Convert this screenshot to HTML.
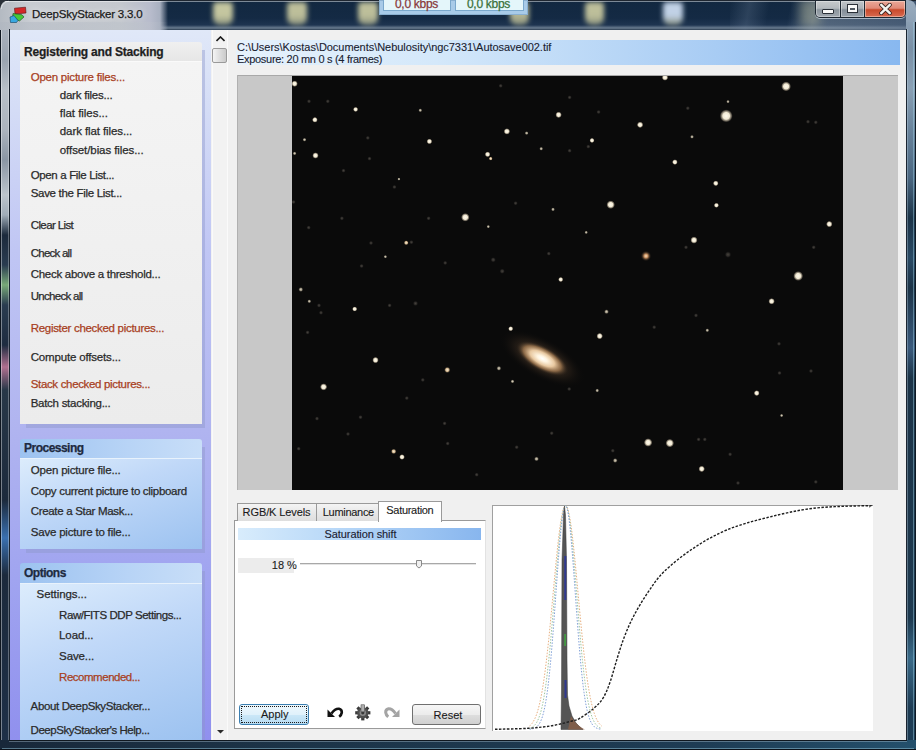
<!DOCTYPE html>
<html><head><meta charset="utf-8"><style>
html,body{margin:0;padding:0;}
body{width:916px;height:750px;overflow:hidden;position:relative;background:#1a2a40;font-family:"Liberation Sans", sans-serif;}
.t{-webkit-text-stroke:0.25px currentColor;}
.t2{-webkit-text-stroke:0.1px currentColor;}
</style></head><body>
<div style="position:absolute;left:0px;top:0px;width:916px;height:30px;background:linear-gradient(to bottom,#122840 0px,#142a44 18px,#1e3450 25px,#6a7c90 28px,#2a3c50 30px);"></div><div style="position:absolute;left:0px;top:0px;width:168px;height:30px;background:linear-gradient(to right,#b4bac2 0px,#c8ccd2 30px,#c4c8ce 120px,#b8bccc 150px,#a8b0c0 160px,rgba(120,135,160,0.0) 168px);"></div><div style="position:absolute;left:0px;top:22px;width:168px;height:8px;background:linear-gradient(to right,rgba(175,182,192,0.5),rgba(190,196,204,0.45) 140px,rgba(60,80,100,0) 168px);"></div><div style="position:absolute;left:213.0px;top:2px;width:20px;height:23px;background:linear-gradient(to bottom,#d4d4a8,#d4d4a8 60%,rgba(190,190,150,0.7));filter:blur(2.5px);border-radius:4px 4px 7px 7px;opacity:0.92;"></div><div style="position:absolute;left:287.0px;top:2px;width:20px;height:23px;background:linear-gradient(to bottom,#ccccA2,#ccccA2 60%,rgba(190,190,150,0.7));filter:blur(2.5px);border-radius:4px 4px 7px 7px;opacity:0.92;"></div><div style="position:absolute;left:358.0px;top:2px;width:20px;height:23px;background:linear-gradient(to bottom,#ccccA2,#ccccA2 60%,rgba(190,190,150,0.7));filter:blur(2.5px);border-radius:4px 4px 7px 7px;opacity:0.92;"></div><div style="position:absolute;left:509.5px;top:2px;width:19px;height:23px;background:linear-gradient(to bottom,#c4c49c,#c4c49c 60%,rgba(190,190,150,0.7));filter:blur(2.5px);border-radius:4px 4px 7px 7px;opacity:0.92;"></div><div style="position:absolute;left:584.5px;top:2px;width:19px;height:23px;background:linear-gradient(to bottom,#ccccA2,#ccccA2 60%,rgba(190,190,150,0.7));filter:blur(2.5px);border-radius:4px 4px 7px 7px;opacity:0.92;"></div><div style="position:absolute;left:663.0px;top:2px;width:20px;height:23px;background:linear-gradient(to bottom,#d0e0f4,#d0e0f4 60%,rgba(190,190,150,0.7));filter:blur(2.5px);border-radius:4px 4px 7px 7px;opacity:0.92;"></div><div style="position:absolute;left:730px;top:0px;width:186px;height:30px;background:linear-gradient(100deg,rgba(140,160,180,0) 0px,rgba(120,140,165,0.25) 20px,rgba(140,160,182,0) 40px,rgba(140,160,182,0) 60px,rgba(150,165,180,0.45) 85px,rgba(110,130,155,0.5) 186px);"></div><div style="position:absolute;left:800px;top:0px;width:20px;height:26px;background:rgba(200,200,160,0.35);filter:blur(4px);"></div><div style="position:absolute;left:0px;top:0px;width:916px;height:1px;background:#1e2630;"></div><div style="position:absolute;left:2px;top:1px;width:904px;height:1px;background:rgba(255,255,255,0.45);"></div><svg style="position:absolute;left:0;top:0" width="10" height="10" viewBox="0 0 10 10"><path d="M0 0 H9 Q1 1 0 9 Z" fill="#2a3038"/><path d="M9 1.2 Q2 2 1.2 9" stroke="rgba(255,255,255,0.5)" stroke-width="1" fill="none"/></svg><div style="position:absolute;left:0px;top:30px;width:10px;height:720px;background:linear-gradient(to bottom,#a8b0bc 0px,#9aa4b0 30px,#b8c0c8 60px,#acb4be 100px,#8a96a4 130px,#bcc4cc 165px,#a0acb8 185px,#1c2a3c 205px,#2a3c50 235px,#78a878 255px,#2a3c50 275px,#1e2c40 315px,#b07090 337px,#283848 360px,#1c2a3c 470px,#3a70b0 508px,#1c2a3c 545px,#1e3048 720px);"></div><div style="position:absolute;left:0px;top:30px;width:1px;height:720px;background:#0e1620;"></div><div style="position:absolute;left:1px;top:30px;width:1px;height:715px;background:rgba(255,255,255,0.4);"></div><div style="position:absolute;left:8px;top:30px;width:1px;height:711px;background:rgba(255,255,255,0.3);"></div><div style="position:absolute;left:9px;top:29px;width:1px;height:712px;background:#1a2430;"></div><div style="position:absolute;left:906px;top:18px;width:10px;height:732px;background:linear-gradient(to bottom,#8ea2b6 0px,#7a90a6 30px,#8aa0b4 70px,#6a849c 110px,#4a6680 160px,#1c3448 200px,#2a4a64 240px,#1c3448 270px,#3a5a7c 330px,#1c3448 360px,#1e3a50 600px,#3a6a88 640px,#1e3c54 690px);"></div><div style="position:absolute;left:915px;top:20px;width:1px;height:730px;background:#0e1a24;"></div><div style="position:absolute;left:913px;top:20px;width:1px;height:725px;background:rgba(160,210,230,0.45);"></div><div style="position:absolute;left:906px;top:29px;width:1px;height:712px;background:#1a2430;"></div><div style="position:absolute;left:907px;top:29px;width:1px;height:712px;background:rgba(200,220,235,0.35);"></div><div style="position:absolute;left:0px;top:740px;width:916px;height:10px;background:linear-gradient(to right,#18283a,#1c3448 300px,#1e3c54 700px,#24506c);"></div><div style="position:absolute;left:9px;top:740px;width:898px;height:1px;background:#101820;"></div><div style="position:absolute;left:9px;top:741px;width:898px;height:1px;background:rgba(200,220,235,0.35);"></div><div style="position:absolute;left:2px;top:748px;width:912px;height:1px;background:rgba(150,200,220,0.5);"></div><div style="position:absolute;left:0px;top:749px;width:916px;height:1px;background:#0a1018;"></div><div style="position:absolute;left:906px;top:0px;width:10px;height:22px;background:linear-gradient(to bottom,#9aacbe,#8ea2b6);border-top-right-radius:8px;"></div><svg style="position:absolute;left:0px;top:0px" width="30" height="26" viewBox="0 0 30 26">
<polygon points="14.5,8.2 25.5,7.2 26,13 15,14" fill="#d42828" stroke="#5a1010" stroke-width="0.6"/>
<polygon points="13,13.5 22,14.8 24,17 19.5,21 12.5,18" fill="#48c838" stroke="#1a4a18" stroke-width="0.6"/>
<polygon points="10,17 14,15.5 18,20.5 16.5,22.5 10.5,22.5" fill="#38a8e0" stroke="#124060" stroke-width="0.6"/>
</svg><div class="t" style="position:absolute;left:32px;top:8.75px;font-size:11.5px;line-height:11.5px;color:#1a1a1a;font-weight:normal;white-space:nowrap;letter-spacing:-0.2px;text-shadow:0 0 6px rgba(255,255,255,0.9);">DeepSkyStacker 3.3.0</div><div style="position:absolute;left:815px;top:0px;width:91px;height:18px;background:#1e2832;border-radius:0 0 5px 5px;box-shadow:0 1px 0 rgba(230,240,250,0.6);"></div><div style="position:absolute;left:816px;top:1px;width:24px;height:16px;background:linear-gradient(to bottom,#c6cacc 0%,#b4babe 45%,#8c969e 55%,#a0a8b0 100%);border-radius:0 0 0 4px;box-shadow:inset 0 0 0 1px rgba(255,255,255,0.35);"></div><div style="position:absolute;left:841px;top:1px;width:23px;height:16px;background:linear-gradient(to bottom,#c0c4c8 0%,#acb2b8 45%,#848e98 55%,#98a2ac 100%);box-shadow:inset 0 0 0 1px rgba(255,255,255,0.35);"></div><div style="position:absolute;left:865px;top:1px;width:40px;height:16px;background:linear-gradient(to bottom,#eaa898 0%,#e08a78 45%,#c84a2c 55%,#d86a50 100%);border-radius:0 0 4px 0;box-shadow:inset 0 0 0 1px rgba(255,235,225,0.45);"></div><div style="position:absolute;left:822px;top:9px;width:12px;height:5px;background:#f8f8f8;border:1px solid #2a3038;border-radius:1px;box-sizing:border-box;"></div><div style="position:absolute;left:847px;top:4px;width:11px;height:9px;background:#2e3640;border:1px solid #2a3038;box-sizing:border-box;box-shadow:inset 0 0 0 2px #f8f8f8, inset 0 2px 0 2px #f8f8f8;"></div><div style="position:absolute;left:850px;top:8px;width:5px;height:2px;background:#505860;"></div><svg style="position:absolute;left:878px;top:3px" width="15" height="12" viewBox="0 0 15 12"><path d="M3.2 1.8 L11.8 10.2 M11.8 1.8 L3.2 10.2" stroke="#3a2420" stroke-width="4" stroke-linecap="round"/><path d="M3.2 1.8 L11.8 10.2 M11.8 1.8 L3.2 10.2" stroke="#f4f4f0" stroke-width="2.4" stroke-linecap="round"/></svg><div style="position:absolute;left:379px;top:0px;width:149px;height:15px;background:#a8cbe8;border:1px solid #8ab0d0;box-sizing:border-box;"></div><div style="position:absolute;left:383px;top:0px;width:68px;height:11px;background:#e4f6fa;border:1px solid #7aa8cc;border-top:none;box-sizing:border-box;"></div><div style="position:absolute;left:455px;top:0px;width:69px;height:11px;background:#e4f6fa;border:1px solid #7aa8cc;border-top:none;box-sizing:border-box;"></div><div class="t" style="position:absolute;left:395px;top:-1.97px;font-size:12px;line-height:12px;color:#883838;font-weight:normal;white-space:nowrap;letter-spacing:-0.3px;">0,0 kbps</div><div class="t" style="position:absolute;left:467px;top:-1.97px;font-size:12px;line-height:12px;color:#387038;font-weight:normal;white-space:nowrap;letter-spacing:-0.3px;">0,0 kbps</div><div style="position:absolute;left:10px;top:30px;width:896px;height:710px;background:#f0f0f0;"></div><div style="position:absolute;left:10px;top:30px;width:201px;height:710px;background:linear-gradient(to bottom,#e0e8f8 0px,#d4dcf6 80px,#c0c6f4 220px,#b0b4f0 400px,#a0a4f0 550px,#9090ee 710px);"></div><div style="position:absolute;left:211px;top:30px;width:17px;height:710px;background:#f2f2f2;"></div><div style="position:absolute;left:212px;top:30px;width:1px;height:710px;background:#fafafa;"></div><div style="position:absolute;left:227px;top:30px;width:1px;height:710px;background:#fafafa;"></div><svg style="position:absolute;left:216px;top:36px" width="9" height="6" viewBox="0 0 9 6"><path d="M0.5 5 L4.5 1 L8.5 5" stroke="#1a1a1a" stroke-width="1.6" fill="none"/></svg><div style="position:absolute;left:212px;top:48px;width:15px;height:15px;background:linear-gradient(to right,#f4f4f4,#dadada 60%,#cacaca);border:1px solid #9a9a9a;border-radius:2px;box-sizing:border-box;"></div><svg style="position:absolute;left:216px;top:729px" width="9" height="5" viewBox="0 0 9 5"><path d="M1 1 L8 1 L4.5 4.5 Z" fill="#2a2a2a"/></svg><div style="position:absolute;left:202px;top:50px;width:3px;height:378px;background:rgba(140,150,200,0.42);"></div><div style="position:absolute;left:26px;top:424px;width:176px;height:4px;background:rgba(140,150,200,0.42);"></div><div style="position:absolute;left:20px;top:42px;width:182px;height:19px;background:linear-gradient(to bottom,#f0f0f0,#e6e6e6);border-radius:3px 3px 0 0;"></div><div style="position:absolute;left:20px;top:61px;width:182px;height:363px;background:linear-gradient(to bottom,#f4f4f4,#ececec);border-top:1px solid #fafafa;box-sizing:border-box;"></div><div style="position:absolute;left:202px;top:447px;width:3px;height:106px;background:rgba(140,150,200,0.42);"></div><div style="position:absolute;left:26px;top:549px;width:176px;height:4px;background:rgba(140,150,200,0.42);"></div><div style="position:absolute;left:20px;top:439px;width:182px;height:19px;background:linear-gradient(to right,#9cc2f0,#b8d4f6 60%,#c8def8);border-radius:3px 3px 0 0;"></div><div style="position:absolute;left:20px;top:458px;width:182px;height:91px;background:linear-gradient(160deg,#dcecfc 0%,#c0d8f8 40%,#9cc2f0 100%);border-top:1px solid #e8f2fc;box-sizing:border-box;"></div><div style="position:absolute;left:202px;top:571px;width:3px;height:169px;background:rgba(140,150,200,0.42);"></div><div style="position:absolute;left:20px;top:563px;width:182px;height:20px;background:linear-gradient(to right,#9cc2f0,#b8d4f6 60%,#c8def8);border-radius:3px 3px 0 0;"></div><div style="position:absolute;left:20px;top:583px;width:182px;height:157px;background:linear-gradient(160deg,#dcecfc 0%,#c0d8f8 40%,#9cc2f0 100%);border-top:1px solid #e8f2fc;box-sizing:border-box;"></div><div class="t" style="position:absolute;left:24px;top:45.73px;font-size:12px;line-height:12px;color:#1e1e1e;font-weight:bold;white-space:nowrap;letter-spacing:-0.191px;">Registering and Stacking</div><div class="t" style="position:absolute;left:30.7px;top:71.95px;font-size:11.5px;line-height:11.5px;color:#a8401e;font-weight:normal;white-space:nowrap;letter-spacing:-0.230px;">Open picture files...</div><div class="t" style="position:absolute;left:59.8px;top:90.45px;font-size:11.5px;line-height:11.5px;color:#2a2a2a;font-weight:normal;white-space:nowrap;letter-spacing:-0.233px;">dark files...</div><div class="t" style="position:absolute;left:59.8px;top:108.45px;font-size:11.5px;line-height:11.5px;color:#2a2a2a;font-weight:normal;white-space:nowrap;letter-spacing:-0.033px;">flat files...</div><div class="t" style="position:absolute;left:59.8px;top:125.95px;font-size:11.5px;line-height:11.5px;color:#2a2a2a;font-weight:normal;white-space:nowrap;letter-spacing:-0.097px;">dark flat files...</div><div class="t" style="position:absolute;left:59.8px;top:144.95px;font-size:11.5px;line-height:11.5px;color:#2a2a2a;font-weight:normal;white-space:nowrap;letter-spacing:-0.082px;">offset/bias files...</div><div class="t" style="position:absolute;left:30.7px;top:170.25px;font-size:11.5px;line-height:11.5px;color:#2a2a2a;font-weight:normal;white-space:nowrap;letter-spacing:-0.350px;">Open a File List...</div><div class="t" style="position:absolute;left:30.7px;top:188.15px;font-size:11.5px;line-height:11.5px;color:#2a2a2a;font-weight:normal;white-space:nowrap;letter-spacing:-0.310px;">Save the File List...</div><div class="t" style="position:absolute;left:30.7px;top:220.05px;font-size:11.5px;line-height:11.5px;color:#2a2a2a;font-weight:normal;white-space:nowrap;letter-spacing:-0.606px;">Clear List</div><div class="t" style="position:absolute;left:30.7px;top:248.45px;font-size:11.5px;line-height:11.5px;color:#2a2a2a;font-weight:normal;white-space:nowrap;letter-spacing:-0.750px;">Check all</div><div class="t" style="position:absolute;left:30.7px;top:268.55px;font-size:11.5px;line-height:11.5px;color:#2a2a2a;font-weight:normal;white-space:nowrap;letter-spacing:-0.274px;">Check above a threshold...</div><div class="t" style="position:absolute;left:30.7px;top:291.05px;font-size:11.5px;line-height:11.5px;color:#2a2a2a;font-weight:normal;white-space:nowrap;letter-spacing:-0.710px;">Uncheck all</div><div class="t" style="position:absolute;left:30.7px;top:322.95px;font-size:11.5px;line-height:11.5px;color:#a8401e;font-weight:normal;white-space:nowrap;letter-spacing:-0.302px;">Register checked pictures...</div><div class="t" style="position:absolute;left:30.7px;top:351.75px;font-size:11.5px;line-height:11.5px;color:#2a2a2a;font-weight:normal;white-space:nowrap;letter-spacing:-0.168px;">Compute offsets...</div><div class="t" style="position:absolute;left:30.7px;top:379.45px;font-size:11.5px;line-height:11.5px;color:#a8401e;font-weight:normal;white-space:nowrap;letter-spacing:-0.333px;">Stack checked pictures...</div><div class="t" style="position:absolute;left:30.7px;top:398.45px;font-size:11.5px;line-height:11.5px;color:#2a2a2a;font-weight:normal;white-space:nowrap;letter-spacing:-0.275px;">Batch stacking...</div><div class="t" style="position:absolute;left:24px;top:442.43px;font-size:12px;line-height:12px;color:#1e2a40;font-weight:bold;white-space:nowrap;letter-spacing:-0.511px;">Processing</div><div class="t" style="position:absolute;left:30.7px;top:465.15px;font-size:11.5px;line-height:11.5px;color:#2a2a2a;font-weight:normal;white-space:nowrap;letter-spacing:-0.176px;">Open picture file...</div><div class="t" style="position:absolute;left:30.7px;top:485.85px;font-size:11.5px;line-height:11.5px;color:#2a2a2a;font-weight:normal;white-space:nowrap;letter-spacing:-0.306px;">Copy current picture to clipboard</div><div class="t" style="position:absolute;left:30.7px;top:506.25px;font-size:11.5px;line-height:11.5px;color:#2a2a2a;font-weight:normal;white-space:nowrap;letter-spacing:-0.310px;">Create a Star Mask...</div><div class="t" style="position:absolute;left:30.7px;top:526.75px;font-size:11.5px;line-height:11.5px;color:#2a2a2a;font-weight:normal;white-space:nowrap;letter-spacing:-0.186px;">Save picture to file...</div><div class="t" style="position:absolute;left:24px;top:567.33px;font-size:12px;line-height:12px;color:#1e2a40;font-weight:bold;white-space:nowrap;letter-spacing:-0.500px;">Options</div><div class="t" style="position:absolute;left:36.6px;top:589.05px;font-size:11.5px;line-height:11.5px;color:#2a2a2a;font-weight:normal;white-space:nowrap;letter-spacing:-0.090px;">Settings...</div><div class="t" style="position:absolute;left:59.1px;top:609.75px;font-size:11.5px;line-height:11.5px;color:#2a2a2a;font-weight:normal;white-space:nowrap;letter-spacing:-0.441px;">Raw/FITS DDP Settings...</div><div class="t" style="position:absolute;left:59.1px;top:629.85px;font-size:11.5px;line-height:11.5px;color:#2a2a2a;font-weight:normal;white-space:nowrap;letter-spacing:-0.117px;">Load...</div><div class="t" style="position:absolute;left:59.1px;top:650.75px;font-size:11.5px;line-height:11.5px;color:#2a2a2a;font-weight:normal;white-space:nowrap;letter-spacing:-0.117px;">Save...</div><div class="t" style="position:absolute;left:59.1px;top:671.85px;font-size:11.5px;line-height:11.5px;color:#a8401e;font-weight:normal;white-space:nowrap;letter-spacing:-0.481px;">Recommended...</div><div class="t" style="position:absolute;left:30.6px;top:700.75px;font-size:11.5px;line-height:11.5px;color:#2a2a2a;font-weight:normal;white-space:nowrap;letter-spacing:-0.368px;">About DeepSkyStacker...</div><div class="t" style="position:absolute;left:30.6px;top:725.45px;font-size:11.5px;line-height:11.5px;color:#2a2a2a;font-weight:normal;white-space:nowrap;letter-spacing:-0.467px;">DeepSkyStacker's Help...</div><div style="position:absolute;left:236px;top:40px;width:664px;height:25px;background:linear-gradient(to right,#e6f2fc 0px,#d4e8fa 200px,#a8ccf4 480px,#88b8f0 664px);"></div><div class="t2" style="position:absolute;left:237px;top:41.86px;font-size:11px;line-height:11px;color:#1a2230;font-weight:normal;white-space:nowrap;letter-spacing:-0.04px;">C:\Users\Kostas\Documents\Nebulosity\ngc7331\Autosave002.tif</div><div class="t2" style="position:absolute;left:237px;top:54.26px;font-size:11px;line-height:11px;color:#1a2230;font-weight:normal;white-space:nowrap;letter-spacing:-0.3px;">Exposure: 20 mn 0 s (4 frames)</div><div style="position:absolute;left:237px;top:75px;width:661px;height:415px;background:#c8c8c8;"></div><div style="position:absolute;left:237px;top:75px;width:661px;height:1px;background:#a8a8a8;"></div><div style="position:absolute;left:237px;top:75px;width:1px;height:415px;background:#b0b0b0;"></div><div style="position:absolute;left:292px;top:76px;width:551px;height:414px;background:#0a0a0a;overflow:hidden;"><svg width="551" height="414" style="position:absolute;left:0;top:0"><defs><radialGradient id="gb"><stop offset="0" stop-color="#fffbee"/><stop offset="0.5" stop-color="#f0e8d2"/><stop offset="0.78" stop-color="#8a8070" stop-opacity="0.7"/><stop offset="1" stop-color="#0a0a0a" stop-opacity="0"/></radialGradient><radialGradient id="gm"><stop offset="0" stop-color="#d8d0bc"/><stop offset="0.45" stop-color="#9a9280"/><stop offset="1" stop-color="#0a0a0a" stop-opacity="0"/></radialGradient><radialGradient id="gf"><stop offset="0" stop-color="#46423c"/><stop offset="0.5" stop-color="#2a2826"/><stop offset="1" stop-color="#0a0a0a" stop-opacity="0"/></radialGradient><radialGradient id="go"><stop offset="0" stop-color="#f8e0c0"/><stop offset="0.35" stop-color="#c89060"/><stop offset="1" stop-color="#0a0a0a" stop-opacity="0"/></radialGradient><radialGradient id="gom"><stop offset="0" stop-color="#faf0dc"/><stop offset="0.5" stop-color="#d0b48c"/><stop offset="1" stop-color="#0a0a0a" stop-opacity="0"/></radialGradient><radialGradient id="gal1"><stop offset="0" stop-color="#ffffff"/><stop offset="0.18" stop-color="#fff4e0"/><stop offset="0.45" stop-color="#e8c8a0"/><stop offset="0.7" stop-color="#a07850" stop-opacity="0.8"/><stop offset="1" stop-color="#0a0a0a" stop-opacity="0"/></radialGradient><radialGradient id="gal2"><stop offset="0" stop-color="#806048" stop-opacity="0.7"/><stop offset="0.6" stop-color="#3a2c20" stop-opacity="0.5"/><stop offset="1" stop-color="#0a0a0a" stop-opacity="0"/></radialGradient></defs><g transform="translate(250.29999999999995,282.5) rotate(29)"><ellipse rx="48" ry="20" fill="url(#gal2)"/><ellipse rx="30" ry="12.5" fill="url(#gal1)"/></g><circle cx="2.6" cy="7.7" r="3.4" fill="url(#gb)"/><circle cx="17.0" cy="25.3" r="2.4" fill="url(#gf)"/><circle cx="35.8" cy="25.3" r="2.4" fill="url(#gf)"/><circle cx="63.6" cy="33.4" r="2.7" fill="url(#gb)"/><circle cx="128.3" cy="34.3" r="2.2" fill="url(#gm)"/><circle cx="22.9" cy="43.8" r="3.0" fill="url(#gb)"/><circle cx="12.5" cy="63.7" r="2.2" fill="url(#gm)"/><circle cx="137.4" cy="65.4" r="3.0" fill="url(#gb)"/><circle cx="75.8" cy="61.9" r="2.4" fill="url(#gf)"/><circle cx="2.6" cy="77.4" r="2.2" fill="url(#gm)"/><circle cx="23.5" cy="79.5" r="3.4" fill="url(#gb)"/><circle cx="77.5" cy="82.6" r="2.4" fill="url(#gf)"/><circle cx="51.5" cy="94.6" r="2.4" fill="url(#gf)"/><circle cx="106.9" cy="103.1" r="1.8" fill="url(#gm)"/><circle cx="102.4" cy="111.0" r="2.4" fill="url(#gf)"/><circle cx="1.5" cy="126.0" r="2.4" fill="url(#gf)"/><circle cx="266.6" cy="38.8" r="3.4" fill="url(#gb)"/><circle cx="348.1" cy="48.8" r="3.4" fill="url(#gb)"/><circle cx="214.9" cy="55.4" r="3.4" fill="url(#gb)"/><circle cx="234.6" cy="57.1" r="2.2" fill="url(#gm)"/><circle cx="300.0" cy="64.4" r="2.7" fill="url(#gb)"/><circle cx="249.2" cy="72.7" r="2.2" fill="url(#gm)"/><circle cx="195.6" cy="78.3" r="3.0" fill="url(#gb)"/><circle cx="198.7" cy="82.6" r="2.2" fill="url(#gom)"/><circle cx="277.6" cy="21.4" r="2.4" fill="url(#gf)"/><circle cx="208.7" cy="9.8" r="2.4" fill="url(#gf)"/><circle cx="277.6" cy="74.7" r="2.4" fill="url(#gf)"/><circle cx="296.3" cy="70.6" r="2.4" fill="url(#gf)"/><circle cx="318.7" cy="128.7" r="4.5" fill="url(#gb)"/><circle cx="261.0" cy="133.4" r="2.2" fill="url(#gm)"/><circle cx="223.6" cy="127.2" r="2.4" fill="url(#gf)"/><circle cx="306.6" cy="36.0" r="2.4" fill="url(#gf)"/><circle cx="373.0" cy="1.5" r="3.4" fill="url(#gb)"/><circle cx="494.1" cy="10.4" r="5.2" fill="url(#gb)"/><circle cx="434.2" cy="39.9" r="6.8" fill="url(#gb)"/><circle cx="436.0" cy="25.6" r="2.0" fill="url(#gm)"/><circle cx="400.0" cy="60.8" r="2.2" fill="url(#gm)"/><circle cx="382.9" cy="86.1" r="3.0" fill="url(#gb)"/><circle cx="423.8" cy="107.3" r="3.0" fill="url(#gb)"/><circle cx="424.4" cy="129.3" r="2.7" fill="url(#gb)"/><circle cx="516.0" cy="45.7" r="2.4" fill="url(#gf)"/><circle cx="523.8" cy="46.3" r="2.4" fill="url(#gf)"/><circle cx="395.8" cy="32.2" r="2.4" fill="url(#gf)"/><circle cx="173.3" cy="141.3" r="4.5" fill="url(#gb)"/><circle cx="114.2" cy="166.8" r="2.7" fill="url(#gom)"/><circle cx="119.4" cy="166.2" r="2.4" fill="url(#gf)"/><circle cx="93.4" cy="180.7" r="2.0" fill="url(#gm)"/><circle cx="153.2" cy="186.9" r="2.4" fill="url(#gf)"/><circle cx="8.8" cy="213.5" r="2.7" fill="url(#gm)"/><circle cx="17.3" cy="225.3" r="2.2" fill="url(#gm)"/><circle cx="62.7" cy="233.0" r="2.7" fill="url(#gb)"/><circle cx="15.6" cy="256.4" r="2.4" fill="url(#gf)"/><circle cx="49.9" cy="142.3" r="2.4" fill="url(#gf)"/><circle cx="136.6" cy="142.3" r="2.4" fill="url(#gf)"/><circle cx="354.0" cy="180.0" r="5.5" fill="url(#go)"/><circle cx="268.7" cy="203.5" r="2.7" fill="url(#gb)"/><circle cx="314.5" cy="235.7" r="2.7" fill="url(#gm)"/><circle cx="307.7" cy="260.1" r="3.4" fill="url(#gb)"/><circle cx="218.7" cy="252.7" r="2.7" fill="url(#gb)"/><circle cx="196.3" cy="150.6" r="2.0" fill="url(#gm)"/><circle cx="294.2" cy="156.4" r="2.0" fill="url(#gm)"/><circle cx="201.2" cy="183.8" r="2.9" fill="url(#gf)"/><circle cx="210.2" cy="195.2" r="2.9" fill="url(#gf)"/><circle cx="256.8" cy="177.6" r="2.4" fill="url(#gf)"/><circle cx="362.2" cy="251.2" r="2.4" fill="url(#gf)"/><circle cx="537.3" cy="148.1" r="3.4" fill="url(#gb)"/><circle cx="402.0" cy="164.1" r="3.8" fill="url(#gb)"/><circle cx="436.0" cy="178.6" r="3.6" fill="url(#gf)"/><circle cx="506.2" cy="200.0" r="5.2" fill="url(#gb)"/><circle cx="479.6" cy="225.3" r="3.4" fill="url(#gb)"/><circle cx="404.0" cy="239.4" r="2.4" fill="url(#gf)"/><circle cx="415.3" cy="254.3" r="2.2" fill="url(#gm)"/><circle cx="487.0" cy="267.8" r="2.4" fill="url(#gf)"/><circle cx="394.0" cy="171.3" r="2.4" fill="url(#gf)"/><circle cx="521.7" cy="171.3" r="2.4" fill="url(#gf)"/><circle cx="83.5" cy="284.1" r="3.4" fill="url(#gb)"/><circle cx="31.6" cy="310.9" r="3.8" fill="url(#gb)"/><circle cx="155.3" cy="293.9" r="3.4" fill="url(#gom)"/><circle cx="130.8" cy="303.9" r="2.4" fill="url(#gf)"/><circle cx="114.8" cy="322.1" r="2.4" fill="url(#gf)"/><circle cx="68.5" cy="341.2" r="2.4" fill="url(#gf)"/><circle cx="152.6" cy="347.4" r="2.4" fill="url(#gf)"/><circle cx="101.7" cy="375.4" r="3.0" fill="url(#gom)"/><circle cx="110.0" cy="381.0" r="3.0" fill="url(#gb)"/><circle cx="206.9" cy="292.3" r="2.7" fill="url(#gm)"/><circle cx="220.5" cy="305.4" r="2.2" fill="url(#gm)"/><circle cx="305.2" cy="314.5" r="2.2" fill="url(#gm)"/><circle cx="277.2" cy="313.0" r="2.4" fill="url(#gf)"/><circle cx="356.1" cy="366.5" r="4.5" fill="url(#gb)"/><circle cx="244.5" cy="382.9" r="2.7" fill="url(#gm)"/><circle cx="323.2" cy="384.5" r="2.7" fill="url(#gm)"/><circle cx="320.8" cy="374.7" r="2.4" fill="url(#gf)"/><circle cx="16.7" cy="151.6" r="2.4" fill="url(#gf)"/><circle cx="79.0" cy="167.0" r="2.4" fill="url(#gf)"/><circle cx="69.6" cy="190.0" r="2.4" fill="url(#gf)"/><circle cx="97.6" cy="229.4" r="2.4" fill="url(#gf)"/><circle cx="123.5" cy="227.4" r="2.9" fill="url(#gf)"/><circle cx="27.0" cy="229.4" r="2.4" fill="url(#gf)"/><circle cx="29.0" cy="236.7" r="2.4" fill="url(#gf)"/><circle cx="25.0" cy="342.6" r="2.4" fill="url(#gf)"/><circle cx="56.0" cy="358.0" r="2.4" fill="url(#gf)"/><circle cx="6.7" cy="372.7" r="2.4" fill="url(#gf)"/><circle cx="155.7" cy="367.5" r="2.4" fill="url(#gf)"/><circle cx="184.7" cy="398.7" r="2.4" fill="url(#gf)"/><circle cx="406.6" cy="363.4" r="2.4" fill="url(#gf)"/><circle cx="412.8" cy="363.4" r="2.4" fill="url(#gf)"/><circle cx="446.0" cy="407.0" r="2.4" fill="url(#gf)"/><circle cx="523.8" cy="405.9" r="2.4" fill="url(#gf)"/><circle cx="259.7" cy="357.2" r="2.4" fill="url(#gf)"/><circle cx="224.7" cy="371.2" r="2.4" fill="url(#gf)"/><circle cx="377.8" cy="367.1" r="4.5" fill="url(#gb)"/><circle cx="409.7" cy="392.9" r="3.4" fill="url(#gb)"/><circle cx="464.7" cy="317.1" r="3.1" fill="url(#gb)"/><circle cx="487.5" cy="297.0" r="2.4" fill="url(#gf)"/><circle cx="519.0" cy="295.0" r="2.4" fill="url(#gf)"/><circle cx="489.6" cy="339.5" r="2.0" fill="url(#gm)"/><circle cx="438.1" cy="378.3" r="2.4" fill="url(#gf)"/></svg></div><div style="position:absolute;left:234px;top:520px;width:252px;height:209px;background:#ffffff;border:1px solid #9a9a9a;border-right-color:#e2e2e2;box-sizing:border-box;"></div><div style="position:absolute;left:237px;top:503px;width:80px;height:18px;background:linear-gradient(to bottom,#f4f4f4,#e8e8e8 50%,#dedede);border:1px solid #9a9a9a;border-bottom:none;box-sizing:border-box;"></div><div style="position:absolute;left:316px;top:503px;width:63px;height:18px;background:linear-gradient(to bottom,#f4f4f4,#e8e8e8 50%,#dedede);border:1px solid #9a9a9a;border-bottom:none;box-sizing:border-box;"></div><div style="position:absolute;left:378px;top:501px;width:64px;height:21px;background:#ffffff;border:1px solid #9a9a9a;border-bottom:none;box-sizing:border-box;"></div><div class="t2" style="position:absolute;left:242.6px;top:507.16px;font-size:11px;line-height:11px;color:#1a1a1a;font-weight:normal;white-space:nowrap;letter-spacing:-0.1px;">RGB/K Levels</div><div class="t2" style="position:absolute;left:322.8px;top:507.16px;font-size:11px;line-height:11px;color:#1a1a1a;font-weight:normal;white-space:nowrap;letter-spacing:-0.3px;">Luminance</div><div class="t2" style="position:absolute;left:386.3px;top:505.06px;font-size:11px;line-height:11px;color:#1a1a1a;font-weight:normal;white-space:nowrap;letter-spacing:-0.3px;">Saturation</div><div style="position:absolute;left:238px;top:528px;width:243px;height:12px;background:linear-gradient(to right,#d8ecfc 0%,#b8d8f8 40%,#88b6ee 100%);"></div><div class="t2" style="position:absolute;left:324.6px;top:528.86px;font-size:11px;line-height:11px;color:#1a2030;font-weight:normal;white-space:nowrap;letter-spacing:-0.1px;">Saturation shift</div><div style="position:absolute;left:238px;top:558px;width:56px;height:15px;background:#ececec;"></div><div class="t2" style="position:absolute;left:271.8px;top:559.76px;font-size:11px;line-height:11px;color:#1a1a1a;font-weight:normal;white-space:nowrap;letter-spacing:0px;">18 %</div><div style="position:absolute;left:300px;top:563px;width:176px;height:1px;background:#a8a8a8;"></div><div style="position:absolute;left:300px;top:564px;width:176px;height:1px;background:#e4e4e4;"></div><svg style="position:absolute;left:415px;top:559px" width="8" height="10" viewBox="0 0 8 10"><path d="M1.5 1.5 H6.5 V7 L4 9 L1.5 7 Z" fill="#f0f0f0" stroke="#8a8a8a" stroke-width="1"/></svg><div style="position:absolute;left:239px;top:704px;width:70px;height:21px;background:linear-gradient(to bottom,#eef8fd,#e0f1fb 50%,#cce8f8 51%,#b8dcf2);border:1px solid #3c7fb1;border-radius:3px;box-sizing:border-box;"></div><div style="position:absolute;left:241px;top:706px;width:66px;height:17px;border:1px dotted #1a1a1a;box-sizing:border-box;"></div><div class="t2" style="position:absolute;left:261px;top:709.36px;font-size:11px;line-height:11px;color:#1a1a1a;font-weight:normal;white-space:nowrap;letter-spacing:0px;">Apply</div><div style="position:absolute;left:412px;top:704px;width:69px;height:21px;background:linear-gradient(to bottom,#f6f6f6,#ececec 50%,#dedede 51%,#d0d0d0);border:1px solid #707070;border-radius:3px;box-sizing:border-box;"></div><div class="t2" style="position:absolute;left:433.6px;top:709.66px;font-size:11px;line-height:11px;color:#1a1a1a;font-weight:normal;white-space:nowrap;letter-spacing:0px;">Reset</div><svg style="position:absolute;left:322px;top:700px" width="84" height="28" viewBox="322 700 84 28"><path d="M331.5 713.5 Q335 708.5 339 708.8 Q342 709.5 341.8 712.5 Q341.5 715 339.2 716.8" stroke="#111" stroke-width="2.6" fill="none"/><path d="M327.5 709.5 L327.5 717 L335 717 Z" fill="#111"/><g transform="translate(362.8,712.8)"><rect x="-1.6" y="-7.6" width="3.2" height="3.5" fill="#3a3a3a" transform="rotate(0)"/><rect x="-1.6" y="-7.6" width="3.2" height="3.5" fill="#3a3a3a" transform="rotate(45)"/><rect x="-1.6" y="-7.6" width="3.2" height="3.5" fill="#3a3a3a" transform="rotate(90)"/><rect x="-1.6" y="-7.6" width="3.2" height="3.5" fill="#3a3a3a" transform="rotate(135)"/><rect x="-1.6" y="-7.6" width="3.2" height="3.5" fill="#3a3a3a" transform="rotate(180)"/><rect x="-1.6" y="-7.6" width="3.2" height="3.5" fill="#3a3a3a" transform="rotate(225)"/><rect x="-1.6" y="-7.6" width="3.2" height="3.5" fill="#3a3a3a" transform="rotate(270)"/><rect x="-1.6" y="-7.6" width="3.2" height="3.5" fill="#3a3a3a" transform="rotate(315)"/><circle r="5.6" fill="#505050"/><circle r="3.2" fill="#8a8a8a"/><circle r="1.6" fill="#3a3a3a"/><rect x="-1.8" y="-8" width="3.6" height="7" fill="#b0b0b0" stroke="#555" stroke-width="0.6"/></g><path d="M395.5 713.5 Q392 708.5 388.5 708.8 Q385.5 709.5 385.7 712.5 Q386 715 388.2 716.8" stroke="#a4a4a4" stroke-width="3" fill="none"/><path d="M399.5 709.5 L399.5 717 L392 717 Z" fill="#a4a4a4"/></svg><div style="position:absolute;left:492px;top:505px;width:381px;height:226px;background:#ffffff;border-top:1px solid #a0a0a0;border-left:1px solid #a0a0a0;box-sizing:border-box;"></div><svg style="position:absolute;left:492px;top:505px" width="381" height="226"><polyline points="37.6,221.0 38.4,220.3 39.2,219.4 40.0,218.5 40.8,217.3 41.6,216.0 42.4,214.6 43.2,212.9 44.0,210.9 44.8,208.7 45.6,206.3 46.4,203.5 47.2,200.4 48.0,197.0 48.8,193.2 49.6,189.0 50.4,184.5 51.2,179.5 52.0,174.2 52.8,168.4 53.6,162.2 54.4,155.6 55.2,148.7 56.0,141.4 56.8,133.7 57.6,125.8 58.4,117.6 59.2,109.1 60.0,100.6 60.8,91.9 61.6,83.2 62.4,74.6 63.2,66.0 64.0,57.7 64.8,49.7 65.6,42.0 66.4,34.7 67.2,28.0 68.0,21.9 68.8,16.4 69.6,11.7 70.4,7.7 71.2,4.6 72.0,2.3 72.8,1.0 73.6,0.5 74.4,1.0 75.2,2.3 76.0,4.6 76.8,7.7 77.6,11.7 78.4,16.4 79.2,21.9 80.0,28.0 80.8,34.7 81.6,42.0 82.4,49.7 83.2,57.7 84.0,66.0 84.8,74.6 85.6,83.2 86.4,91.9 87.2,100.6 88.0,109.1 88.8,117.6 89.6,125.8 90.4,133.7 91.2,141.4 92.0,148.7 92.8,155.6 93.6,162.2 94.4,168.4 95.2,174.2 96.0,179.5 96.8,184.5 97.6,189.0 98.4,193.2 99.2,197.0 100.0,200.4 100.8,203.5 101.6,206.3 102.4,208.7 103.2,210.9 104.0,212.9 104.8,214.6 105.6,216.0 106.4,217.3 107.2,218.5 108.0,219.4 108.8,220.3 109.6,221.0" fill="none" stroke="#e8b080" stroke-width="1" stroke-dasharray="1.5 1.5"/><polyline points="37.6,223.4 38.4,223.2 39.2,222.8 40.0,222.4 40.8,221.9 41.6,221.2 42.4,220.5 43.2,219.6 44.0,218.5 44.8,217.2 45.6,215.7 46.4,214.0 47.2,211.9 48.0,209.6 48.8,206.9 49.6,203.8 50.4,200.3 51.2,196.3 52.0,191.9 52.8,187.0 53.6,181.6 54.4,175.7 55.2,169.2 56.0,162.2 56.8,154.7 57.6,146.7 58.4,138.3 59.2,129.4 60.0,120.2 60.8,110.7 61.6,101.0 62.4,91.1 63.2,81.2 64.0,71.4 64.8,61.8 65.6,52.6 66.4,43.7 67.2,35.4 68.0,27.7 68.8,20.8 69.6,14.8 70.4,9.8 71.2,5.8 72.0,2.9 72.8,1.1 73.6,0.5 74.4,1.1 75.2,2.9 76.0,5.8 76.8,9.8 77.6,14.8 78.4,20.8 79.2,27.7 80.0,35.4 80.8,43.7 81.6,52.6 82.4,61.8 83.2,71.4 84.0,81.2 84.8,91.1 85.6,101.0 86.4,110.7 87.2,120.2 88.0,129.4 88.8,138.3 89.6,146.7 90.4,154.7 91.2,162.2 92.0,169.2 92.8,175.7 93.6,181.6 94.4,187.0 95.2,191.9 96.0,196.3 96.8,200.3 97.6,203.8 98.4,206.9 99.2,209.6 100.0,211.9 100.8,214.0 101.6,215.7 102.4,217.2 103.2,218.5 104.0,219.6 104.8,220.5 105.6,221.2 106.4,221.9 107.2,222.4 108.0,222.8 108.8,223.2 109.6,223.4" fill="none" stroke="#a0c8a0" stroke-width="1" stroke-dasharray="1.5 1.5"/><polyline points="37.6,224.3 38.4,224.2 39.2,224.1 40.0,223.9 40.8,223.8 41.6,223.5 42.4,223.2 43.2,222.9 44.0,222.4 44.8,221.8 45.6,221.0 46.4,220.1 47.2,219.0 48.0,217.6 48.8,216.0 49.6,214.0 50.4,211.7 51.2,208.9 52.0,205.7 52.8,202.0 53.6,197.8 54.4,192.9 55.2,187.4 56.0,181.3 56.8,174.5 57.6,167.0 58.4,158.9 59.2,150.1 60.0,140.7 60.8,130.7 61.6,120.3 62.4,109.5 63.2,98.4 64.0,87.2 64.8,76.1 65.6,65.1 66.4,54.4 67.2,44.3 68.0,34.9 68.8,26.3 69.6,18.8 70.4,12.4 71.2,7.3 72.0,3.5 72.8,1.3 73.6,0.5 74.4,1.3 75.2,3.5 76.0,7.3 76.8,12.4 77.6,18.8 78.4,26.3 79.2,34.9 80.0,44.3 80.8,54.4 81.6,65.1 82.4,76.1 83.2,87.2 84.0,98.4 84.8,109.5 85.6,120.3 86.4,130.7 87.2,140.7 88.0,150.1 88.8,158.9 89.6,167.0 90.4,174.5 91.2,181.3 92.0,187.4 92.8,192.9 93.6,197.8 94.4,202.0 95.2,205.7 96.0,208.9 96.8,211.7 97.6,214.0 98.4,216.0 99.2,217.6 100.0,219.0 100.8,220.1 101.6,221.0 102.4,221.8 103.2,222.4 104.0,222.9 104.8,223.2 105.6,223.5 106.4,223.8 107.2,223.9 108.0,224.1 108.8,224.2 109.6,224.3" fill="none" stroke="#80a0d8" stroke-width="1" stroke-dasharray="1.5 1.5"/><polygon points="69.0,224.5 69.5,185.0 70.0,55.0 71.5,10.0 72.5,1.0 73.5,10.0 74.5,55.0 75.0,155.0 75.5,190.0 77.0,201.0 80.0,211.0 84.0,218.0 88.0,222.0 91.0,224.5" fill="#555555" stroke="#3a3a3a" stroke-width="0.5"/><polygon points="76.0,224.5 79.0,211.0 82.0,216.0 86.0,220.0 90.0,223.0 93.0,224.5" fill="#8a6048" opacity="0.8"/><rect x="72.29999999999995" y="51" width="2" height="44" fill="#303890"/><rect x="72.29999999999995" y="129" width="1.6" height="12" fill="#40a040"/><rect x="72.5" y="175" width="2" height="18" fill="#303890"/><path d="M3.0,224.3 C8.5,224.1 26.5,223.9 36.0,223.3 C45.5,222.7 52.7,221.9 60.0,220.7 C67.3,219.5 75.3,217.2 80.0,216.0 C84.7,214.8 84.3,215.3 88.0,213.2 C91.7,211.1 98.1,206.6 102.0,203.2 C105.9,199.8 108.6,197.2 111.3,192.7 C114.0,188.2 116.0,183.0 118.3,176.4 C120.6,169.8 123.0,160.4 125.3,153.0 C127.6,145.6 129.6,139.0 132.3,132.0 C135.0,125.0 137.8,118.4 141.7,111.0 C145.6,103.6 150.7,95.1 155.7,87.7 C160.8,80.3 164.4,74.1 172.0,66.7 C179.6,59.3 190.8,50.2 201.3,43.3 C211.8,36.3 222.5,30.1 234.7,25.0 C246.9,19.9 260.3,16.3 274.7,12.7 C289.1,9.1 304.6,5.3 321.3,3.3 C338.0,1.3 365.2,0.9 374.7,0.7 C384.2,0.5 377.5,1.8 378.0,2.0 " fill="none" stroke="#1e1e1e" stroke-width="1.4" stroke-dasharray="2.5 1.5"/></svg>
</body></html>
